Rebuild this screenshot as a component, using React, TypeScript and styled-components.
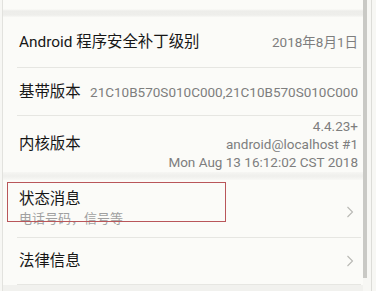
import React from "react";
import styled, { createGlobalStyle } from "styled-components";

const Global = createGlobalStyle`
  html, body { margin: 0; padding: 0; background: #f5f5f2; }
  body { font-family: Roboto, "Noto Sans CJK SC", sans-serif; }
`;

const Frame = styled.div`
  width: 376px;
  height: 291px;
  overflow: hidden;
  display: flex;
  background: #f7f7f4;
`;

const Screen = styled.div`
  width: 361px;
  border-left: 1px solid #e2e2de;
  margin-left: 2px;
  display: flex;
  flex-direction: column;
  background: #fbfbf8;
`;

const TopBand = styled.div`
  height: 17px;
  flex: none;
  background: linear-gradient(#fbfbf8 0, #fbfbf8 9px, #ededea 11px, #eeeeeb 15px, #f8f8f5 17px);
`;

const Row = styled.div<{ $h: number; $pt?: number }>`
  position: relative;
  height: ${(p) => p.$h}px;
  flex: none;
  box-sizing: border-box;
  padding: ${(p) => p.$pt ?? 0}px 5px 0 16px;
  display: flex;
  align-items: ${(p) => (p.$pt !== undefined ? "flex-start" : "center")};
  justify-content: space-between;
`;

const Divider = styled.div`
  height: 1px;
  flex: none;
  margin: 0 2px 0 14px;
  background: #e6e6e2;
`;

const SectionBand = styled.div`
  height: 8px;
  flex: none;
  background: linear-gradient(#f6f6f3, #efefec 50%, #f8f8f5);
`;

const Label = styled.div`
  font-size: 15.4px;
  color: #161616;
  line-height: 20px;
  white-space: nowrap;
`;

const Value = styled.div`
  font-size: 13.5px;
  color: #7e7e7e;
  line-height: 18px;
  text-align: right;
  white-space: nowrap;
`;

const Stack = styled.div`
  display: flex;
  flex-direction: column;
`;

const Sub = styled.div`
  font-size: 13px;
  color: #a0a0a0;
  line-height: 18px;
  margin-top: 1px;
`;

const Mark = styled.div`
  position: absolute;
  left: 4px;
  top: 2px;
  width: 219px;
  height: 40px;
  box-sizing: border-box;
  border: 1px solid #b9565a;
  pointer-events: none;
`;

const Chevron = styled.svg`
  width: 8px;
  height: 12px;
  margin-right: 4px;
  flex: none;
`;

const ChevronBox = styled.div<{ $dy?: number }>`
  align-self: center;
  margin-top: ${(p) => p.$dy ?? 0}px;
`;

const Bottom = styled.div`
  flex: 1;
  background: #f1f1ee;
`;

const Track = styled.div`
  width: 4px;
  flex: none;
  display: flex;
  flex-direction: column;
`;

const Thumb = styled.div`
  height: 278px;
  background: #c9c9c5;
`;

const Edge = styled.div`
  width: 9px;
  flex: none;
  box-sizing: border-box;
  padding-left: 4px;
  display: flex;
`;

const EdgeLine = styled.div`
  width: 1px;
  background: #dcdcd8;
`;

const Arrow = () => (
  <Chevron viewBox="0 0 8 12">
    <path d="M1.5 1 L6.5 6 L1.5 11" fill="none" stroke="#b8b8b4" strokeWidth="1.1" />
  </Chevron>
);

export default function App() {
  return (
    <>
      <Global />
      <Frame>
        <Screen>
          <TopBand />
          <Row $h={50}>
            <Label>Android 程序安全补丁级别</Label>
            <Value>2018年8月1日</Value>
          </Row>
          <Divider />
          <Row $h={47}>
            <Label>基带版本</Label>
            <Value>21C10B570S010C000,21C10B570S010C000</Value>
          </Row>
          <Divider />
          <Row $h={56}>
            <Label>内核版本</Label>
            <Value>
              4.4.23+
              <br />
              android@localhost #1
              <br />
              Mon Aug 13 16:12:02 CST 2018
            </Value>
          </Row>
          <SectionBand />
          <Row $h={57} $pt={9}>
            <Stack>
              <Label>状态消息</Label>
              <Sub>电话号码，信号等</Sub>
            </Stack>
            <ChevronBox $dy={-2}>
              <Arrow />
            </ChevronBox>
            <Mark />
          </Row>
          <Divider />
          <Row $h={46}>
            <Label>法律信息</Label>
            <ChevronBox>
              <Arrow />
            </ChevronBox>
          </Row>
          <Divider />
          <Bottom />
        </Screen>
        <Track>
          <Thumb />
        </Track>
        <Edge>
          <EdgeLine />
        </Edge>
      </Frame>
    </>
  );
}
